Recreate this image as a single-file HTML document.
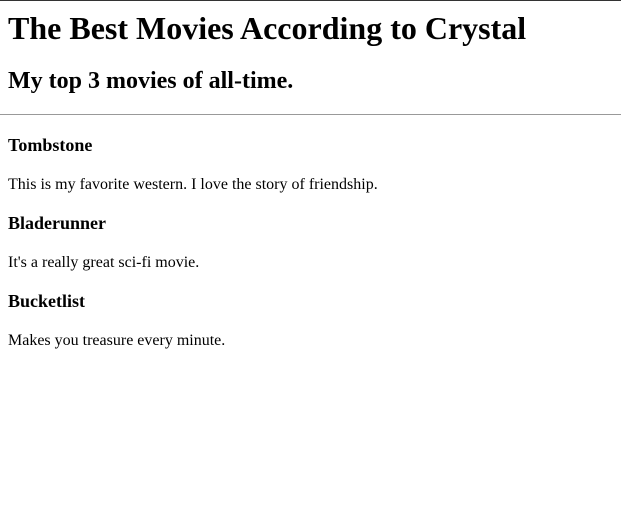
<!DOCTYPE html>
<html>
<head>
<meta charset="utf-8">
<style>
html{border-top:1px solid #333;}
body{margin:0 8px;font-family:"Liberation Serif",serif;font-size:16px;color:#000;background:#fff;}
h1{margin:9px 0 21px;font-size:32px;font-family:"Liberation Serif",serif;}
h2{font-size:24px;margin:20px 0 19px;font-family:"Liberation Serif",serif;}
h4{font-size:18px;margin:19px 0 20px;font-family:"Liberation Serif",serif;}
hr + h4{margin-top:20px;}
hr{margin:0 -8px;border:0;border-top:1px solid #999;}
p{margin:16px 0;}
</style>
</head>
<body>
<h1>The Best Movies According to Crystal</h1>
<h2>My top 3 movies of all-time.</h2>
<hr>
<h4>Tombstone</h4>
<p>This is my favorite western. I love the story of friendship.</p>
<h4>Bladerunner</h4>
<p>It's a really great sci-fi movie.</p>
<h4>Bucketlist</h4>
<p>Makes you treasure every minute.</p>
</body>
</html>
